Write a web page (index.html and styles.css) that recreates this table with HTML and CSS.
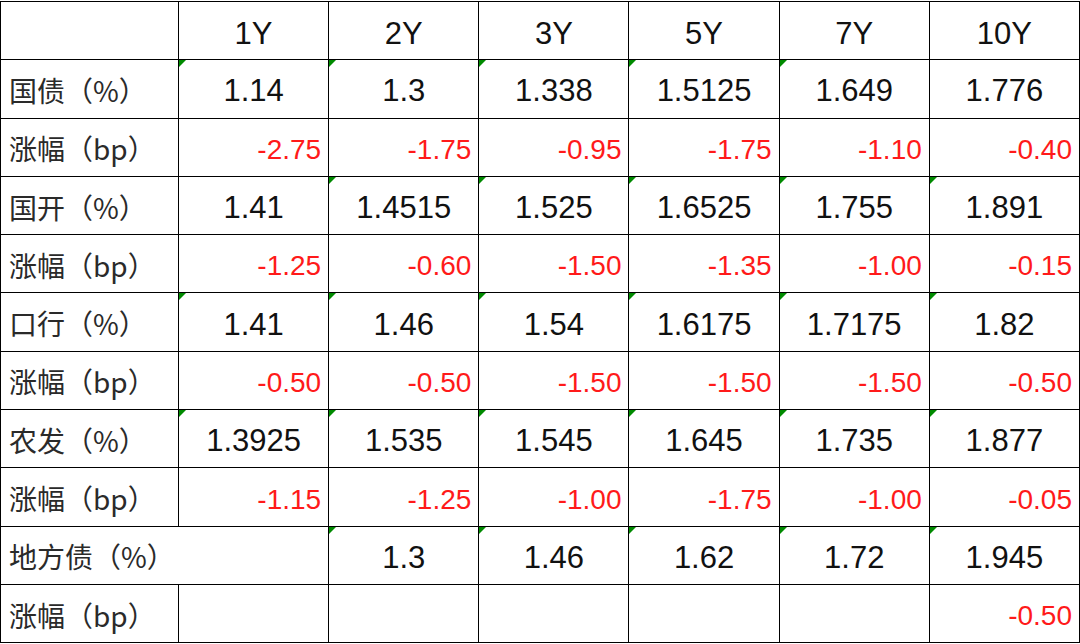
FILE: index.html
```html
<!DOCTYPE html>
<html lang="zh-CN">
<head>
    <meta charset="UTF-8">
    <meta name="viewport" content="width=device-width, initial-scale=1.0">
    <link rel="stylesheet" href="styles.css">
    <title>利率债收益率</title>
</head>
<body>
    <table class="rates">
        <colgroup>
            <col class="c-label">
            <col><col><col><col><col><col>
        </colgroup>
        <tr class="head">
            <td></td>
            <td>1Y</td>
            <td>2Y</td>
            <td>3Y</td>
            <td>5Y</td>
            <td>7Y</td>
            <td>10Y</td>
        </tr>
        <tr>
            <td class="label">国债（%）</td>
            <td class="flag">1.14</td>
            <td class="flag">1.3</td>
            <td class="flag">1.338</td>
            <td class="flag">1.5125</td>
            <td class="flag">1.649</td>
            <td>1.776</td>
        </tr>
        <tr>
            <td class="label">涨幅（bp）</td>
            <td class="chg">-2.75</td>
            <td class="chg">-1.75</td>
            <td class="chg">-0.95</td>
            <td class="chg">-1.75</td>
            <td class="chg">-1.10</td>
            <td class="chg">-0.40</td>
        </tr>
        <tr>
            <td class="label">国开（%）</td>
            <td>1.41</td>
            <td class="flag">1.4515</td>
            <td class="flag">1.525</td>
            <td class="flag">1.6525</td>
            <td class="flag">1.755</td>
            <td class="flag">1.891</td>
        </tr>
        <tr>
            <td class="label">涨幅（bp）</td>
            <td class="chg">-1.25</td>
            <td class="chg">-0.60</td>
            <td class="chg">-1.50</td>
            <td class="chg">-1.35</td>
            <td class="chg">-1.00</td>
            <td class="chg">-0.15</td>
        </tr>
        <tr>
            <td class="label">口行（%）</td>
            <td class="flag">1.41</td>
            <td class="flag">1.46</td>
            <td class="flag">1.54</td>
            <td class="flag">1.6175</td>
            <td class="flag">1.7175</td>
            <td class="flag">1.82</td>
        </tr>
        <tr>
            <td class="label">涨幅（bp）</td>
            <td class="chg">-0.50</td>
            <td class="chg">-0.50</td>
            <td class="chg">-1.50</td>
            <td class="chg">-1.50</td>
            <td class="chg">-1.50</td>
            <td class="chg">-0.50</td>
        </tr>
        <tr>
            <td class="label">农发（%）</td>
            <td class="flag">1.3925</td>
            <td class="flag">1.535</td>
            <td class="flag">1.545</td>
            <td class="flag">1.645</td>
            <td class="flag">1.735</td>
            <td class="flag">1.877</td>
        </tr>
        <tr>
            <td class="label">涨幅（bp）</td>
            <td class="chg">-1.15</td>
            <td class="chg">-1.25</td>
            <td class="chg">-1.00</td>
            <td class="chg">-1.75</td>
            <td class="chg">-1.00</td>
            <td class="chg">-0.05</td>
        </tr>
        <tr>
            <td class="label" colspan="2">地方债（%）</td>
            <td class="flag">1.3</td>
            <td class="flag">1.46</td>
            <td class="flag">1.62</td>
            <td class="flag">1.72</td>
            <td class="flag">1.945</td>
        </tr>
        <tr>
            <td class="label">涨幅（bp）</td>
            <td></td>
            <td></td>
            <td></td>
            <td></td>
            <td></td>
            <td class="chg">-0.50</td>
        </tr>
    </table>
</body>
</html>
```

FILE: styles.css
```css
*{
    padding: 0;
    margin: 0;
    box-sizing: border-box;
}
body{
    background: #fff;
    padding-top: 1px;
}
.rates{
    width: 1080px;
    table-layout: fixed;
    border-collapse: collapse;
    font-family: "Liberation Sans", "Noto Sans CJK SC", sans-serif;
    font-size: 31px;
    color: #111;
}
.rates .c-label{
    width: 178px;
}
.rates td{
    position: relative;
    height: 58.3px;
    border: 1.5px solid #000;
    text-align: center;
    vertical-align: middle;
    padding: 5px 8px 0;
    white-space: nowrap;
}
.rates .head td{
    padding-top: 6px;
}
.rates td.label{
    text-align: left;
    font-family: "Noto Sans CJK SC", sans-serif;
    font-size: 28px;
    color: #2a2a2a;
    padding-left: 8px;
    padding-top: 2px;
}
.rates td.chg{
    color: #ff1a1a;
    text-align: right;
    font-size: 28px;
    padding-right: 7px;
}
/* excel "number stored as text" marker */
.rates td.flag::before{
    content: "";
    position: absolute;
    left: 0;
    top: 0;
    border-top: 7px solid #008a00;
    border-right: 7px solid transparent;
}
```
